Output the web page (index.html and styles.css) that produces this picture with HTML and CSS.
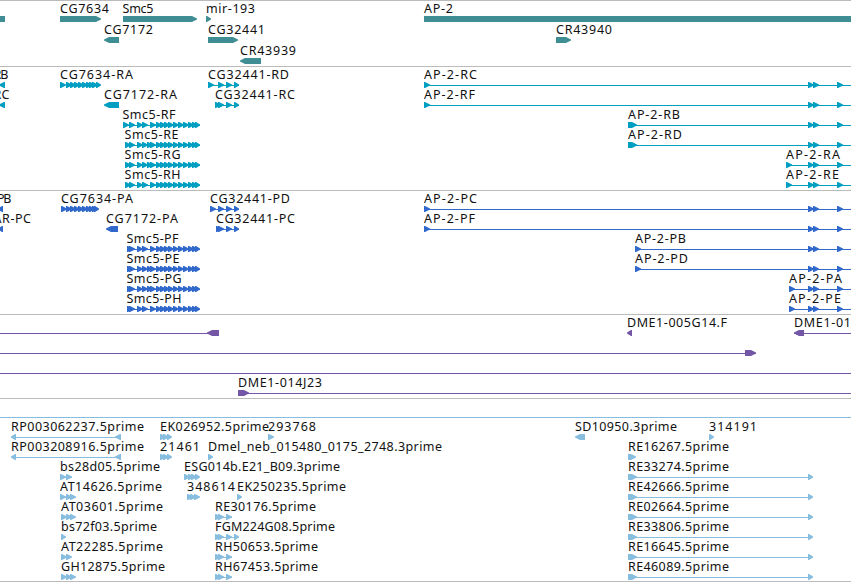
FILE: index.html
```
<!DOCTYPE html>
<html lang="en">
  <head>
    <title>Genome browser</title>
    <meta charset="UTF-8">
    <link rel="stylesheet" href="styles.css">
  </head>

  <body>
    <div class="browser">
      <svg class="track genes" id="genes"></svg>
      <svg class="track transcripts" id="transcripts"></svg>
      <svg class="track proteins" id="proteins"></svg>
      <svg class="track clones" id="clones"></svg>
      <div class="track-head"></div>
      <svg class="track ests" id="ests"></svg>
    </div>
    <script src="tracks.js"></script>
  </body>
</html>
```
FILE: styles.css
```
body {
  margin: 0;
  background: #fff;
}
.browser {
  display: flex;
  flex-direction: column;
  width: 851px;
  height: 582px;
  overflow: hidden;
  border-bottom: 1px solid #bbb;
  box-sizing: border-box;
}
.track {
  display: block;
  box-sizing: border-box;
  width: 100%;
  flex: none;
  border-top: 1px solid #bbb;
}
.track text {
  font-family: "Noto Sans", "DejaVu Sans", sans-serif;
  font-size: 12.5px;
  fill: #111;
  white-space: pre;
}
.genes { height: 66px; color: #3f8e93; }
.transcripts { height: 124px; color: #009fc1; }
.proteins { height: 124px; color: #3069cb; }
.clones { height: 84px; color: #7356a6; }
.track-head {
  flex: none;
  height: 19px;
  box-sizing: border-box;
  border-top: 1px solid #bbb;
}
.ests {
  height: 164px;
  padding-top: 1px;
  color: #87bddf;
  border-top-color: #87bddf;
}
.exon, .intron {
  fill: currentColor;
}
```
FILE: tracks.js
```
// feature: [row, label, label x, label width, exons, intron, run-in block]
// exon: [start, end], written end first when it points left
var END = 851;

function arrows(starts, end) {
  return starts.map(function (x, i) {
    return [x, i == starts.length - 1 ? end : x + 6];
  });
}

var smc5 = [129, 137, 142, 150, 156, 160, 164, 168, 173, 178, 183, 188, 192, 195];
var smc5b = [129, 137, 142, 147, 150, 156, 160, 164, 168, 173, 178, 183, 188, 192, 195];
var ap2 = [[808, 814], [813, 819], [837, 843]];
var cg7634 = [66, 70, 74, 78, 82, 86, 89, 92];

var tracks = {
  genes: [
    [0, "", 0, 0, [], [], [-10, 5]],
    [0, "CG7634", 60, 49, [[60, 101]]],
    [0, "Smc5", 122.5, 31, [[123, 197]]],
    [0, "mir-193", 206, 49, [[206, 211]]],
    [0, "AP-2", 424, 29, [[424, 870]]],
    [1, "CG7172", 104, 49, [[119, 104]]],
    [1, "CG32441", 208, 57, [[208, 238]]],
    [1, "CR43940", 556, 56, [[556, 571]]],
    [2, "CR43939", 240, 56, [[261, 240]]]
  ],
  transcripts: [
    [0, "RB", -6.5, 15, [[5, -1]]],
    [0, "CG7634-RA", 60, 73, arrows([60].concat(cg7634, 96), 101)],
    [0, "CG32441-RD", 208, 81, arrows([208, 218, 226, 234], 239), [208, 239]],
    [0, "AP-2-RC", 424, 53, [[424, 430]].concat(ap2), [424, END]],
    [1, "RC", -6.5, 16, [[5, -1]]],
    [1, "CG7172-RA", 104, 73, [[119, 104]]],
    [1, "CG32441-RC", 215, 80, arrows([215, 218, 226, 234], 239), [215, 239]],
    [1, "AP-2-RF", 424, 51, [[424, 430]].concat(ap2), [424, END]],
    [2, "Smc5-RF", 122.5, 53, arrows([123].concat(smc5), 200), [123, 200]],
    [2, "AP-2-RB", 628, 52, [[628, 637]].concat(ap2), [628, END]],
    [3, "Smc5-RE", 124.5, 54, arrows([125].concat(smc5b), 200), [125, 200]],
    [3, "AP-2-RD", 628, 54, [[628, 637]].concat(ap2), [628, END]],
    [4, "Smc5-RG", 124.5, 56, arrows([125].concat(smc5b), 200), [125, 200]],
    [4, "AP-2-RA", 786, 54, [[786, 792]].concat(ap2), [786, END]],
    [5, "Smc5-RH", 124.5, 56, arrows([125].concat(smc5), 200), [125, 200]],
    [5, "AP-2-RE", 786, 53, [[786, 792]].concat(ap2), [786, END]]
  ],
  proteins: [
    [0, "PB", -3, 14.5, [[3, -2]]],
    [0, "CG7634-PA", 61, 72, arrows([61].concat(cg7634, 94), 99)],
    [0, "CG32441-PD", 210, 80, arrows([210, 218, 226, 234], 239), [210, 239]],
    [0, "AP-2-PC", 424, 53, [[424, 430]].concat(ap2), [424, END]],
    [1, "AR-PC", -6.5, 37.5, [[3, -2]]],
    [1, "CG7172-PA", 106, 72, [[118, 106]]],
    [1, "CG32441-PC", 216, 79, arrows([216, 218, 226, 234], 239), [216, 239]],
    [1, "AP-2-PF", 424, 51, [[424, 430]].concat(ap2), [424, END]],
    [2, "Smc5-PF", 126.5, 52, arrows([127].concat(smc5), 200), [127, 200]],
    [2, "AP-2-PB", 635, 51, [[635, 641]].concat(ap2), [635, END]],
    [3, "Smc5-PE", 126.5, 53, arrows([127].concat(smc5b), 200), [127, 200]],
    [3, "AP-2-PD", 635, 53, [[635, 641]].concat(ap2), [635, END]],
    [4, "Smc5-PG", 126.5, 55, arrows([127].concat(smc5b), 200), [127, 200]],
    [4, "AP-2-PA", 789, 53, [[789, 795]].concat(ap2), [789, END]],
    [5, "Smc5-PH", 126.5, 55, arrows([127].concat(smc5), 200), [127, 200]],
    [5, "AP-2-PE", 789, 52, [[789, 795]].concat(ap2), [789, END]]
  ],
  clones: [
    [0, "", 0, 0, [[219, 207]], [0, 219]],
    [0, "DME1-005G14.F", 627, 100, [[632, 627]]],
    [0, "DME1-01", 794, 57, [[804, 794]], [794, END]],
    [1, "", 0, 0, [[745, 756]], [0, 756]],
    [2, "", 0, 0, [], [0, END]],
    [3, "DME1-014J23", 238, 84, [[238, 249]], [238, END]]
  ],
  ests: [
    [0, "RP003062237.5prime", 11, 133, [[16, 11], [121, 115]], [11, 121]],
    [0, "EK026952.5prime", 160, 109, arrows([160, 163, 167], 172)],
    [0, "293768", 268, 48, [[268, 274]]],
    [0, "SD10950.3prime", 575, 102, [[585, 575]]],
    [0, "314191", 709, 48, [[709, 714]]],
    [1, "RP003208916.5prime", 11, 133, [[16, 11], [121, 115]], [11, 121]],
    [1, "21461", 160, 40, arrows([160, 163, 167], 172)],
    [1, "Dmel_neb_015480_0175_2748.3prime", 208, 234, [[208, 213]]],
    [1, "RE16267.5prime", 628, 101, [[628, 636]]],
    [2, "bs28d05.5prime", 60, 100, arrows([60, 66], 72), [60, 72]],
    [2, "ESG014b.E21_B09.3prime", 184, 156, arrows([184, 188, 191, 195], 200)],
    [2, "RE33274.5prime", 628, 101, [[628, 637], [808, 813]], [628, 813]],
    [3, "AT14626.5prime", 60, 102, arrows([60, 66, 70], 76), [60, 76]],
    [3, "348614", 187, 48, arrows([187, 190, 194], 200)],
    [3, "EK250235.5prime", 237, 109, [[237, 242]]],
    [3, "RE42666.5prime", 628, 101, [[628, 637], [808, 813]], [628, 813]],
    [4, "AT03601.5prime", 61, 102, arrows([61, 66, 70], 76)],
    [4, "RE30176.5prime", 215, 101, arrows([215, 218, 226], 232), [215, 232]],
    [4, "RE02664.5prime", 628, 101, [[628, 637], [808, 813]], [628, 813]],
    [5, "bs72f03.5prime", 61, 96, [[61, 66]]],
    [5, "FGM224G08.5prime", 215, 120, arrows([215, 218, 226, 234], 239), [215, 239]],
    [5, "RE33806.5prime", 628, 101, [[628, 637], [808, 813]], [628, 813]],
    [6, "AT22285.5prime", 61, 102, arrows([61, 66], 72)],
    [6, "RH50653.5prime", 215, 103, arrows([215, 218, 226], 232), [215, 232]],
    [6, "RE16645.5prime", 628, 101, [[628, 637], [808, 813]], [628, 813]],
    [7, "GH12875.5prime", 61, 104, arrows([61, 66, 70], 76)],
    [7, "RH67453.5prime", 215, 103, arrows([215, 218, 226], 232), [215, 232]],
    [7, "RE46089.5prime", 628, 101, [[628, 637], [808, 813]], [628, 813]]
  ]
};

function add(parent, tag, attrs) {
  var el = document.createElementNS("http://www.w3.org/2000/svg", tag);
  for (var key in attrs) el.setAttribute(key, attrs[key]);
  parent.appendChild(el);
  return el;
}

// block with a pointed head on the end side
function exonPath(from, to, y) {
  var neck = to > from ? Math.max(from + 1, to - 5) : Math.min(from - 1, to + 5);
  return "M" + from + " " + y + "H" + neck + "L" + to + " " + (y + 2.5) +
    "V" + (y + 3.5) + "L" + neck + " " + (y + 6) + "H" + from + "Z";
}

for (var name in tracks) {
  var svg = document.getElementById(name);
  var pitch = name == "genes" ? 21 : 20;
  tracks[name].forEach(function (f) {
    var y = 15 + f[0] * pitch;
    if (f[5] && f[5].length) {
      add(svg, "rect", {class: "intron", x: f[5][0], y: y + 3, width: f[5][1] - f[5][0], height: 1});
    }
    if (f[6]) {
      // runs in from off the left side, no head
      add(svg, "rect", {class: "exon", x: f[6][0], y: y, width: f[6][1] - f[6][0], height: 6});
    }
    f[4].forEach(function (e) {
      add(svg, "path", {class: "exon", d: exonPath(e[0], e[1], y)});
    });
    if (f[1]) {
      add(svg, "text", {x: f[2], y: y - 3, textLength: f[3]}).textContent = f[1];
    }
  });
}
```
